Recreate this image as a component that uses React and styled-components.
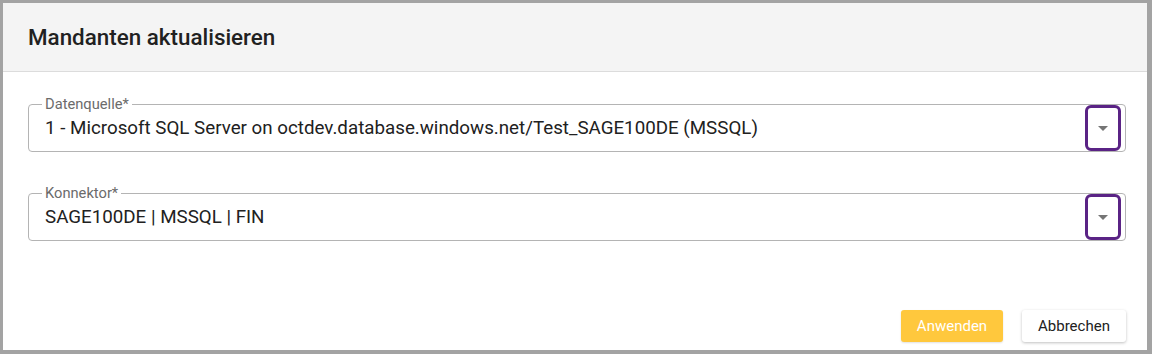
import React from 'react';
import styled, { createGlobalStyle } from 'styled-components';

const GlobalStyle = createGlobalStyle`
  html, body {
    margin: 0;
    padding: 0;
    background: #a3a3a3;
    font-family: Roboto, "Liberation Sans", Arial, sans-serif;
  }
  * { box-sizing: border-box; }
`;

const Dialog = styled.div`
  margin: 3px 5px 4px 3px;
  height: 347px;
  background: #ffffff;
  display: flex;
  flex-direction: column;
`;

const Header = styled.div`
  height: 69px;
  background: #f4f4f4;
  border-bottom: 1px solid #dcdcdc;
  display: flex;
  align-items: center;
  padding-left: 25px;
`;

const Title = styled.h2`
  margin: 0;
  font-size: 22.4px;
  font-weight: 500;
  color: #212121;
`;

const Body = styled.div`
  padding: 32px 21px 0 25px;
  display: flex;
  flex-direction: column;
  gap: 41px;
`;

const Field = styled.div`
  position: relative;
  height: 48px;
  border: 1px solid #b4b4b4;
  border-radius: 4px;
  display: flex;
  align-items: stretch;
  padding: 0 4px 0 16px;
`;

const Label = styled.span`
  position: absolute;
  top: -9px;
  left: 13px;
  padding: 0 3px;
  background: #ffffff;
  font-size: 14.7px;
  line-height: 17px;
  color: #6b6b6b;
`;

const Value = styled.div`
  flex: 1;
  display: flex;
  align-items: center;
  font-size: 18.75px;
  color: #212121;
`;

const ArrowBox = styled.div`
  width: 36px;
  border: 3.5px solid #5a2385;
  border-radius: 6px;
  display: flex;
  align-items: center;
  justify-content: center;
`;

const Arrow = styled.span`
  width: 0;
  height: 0;
  border-left: 5.5px solid transparent;
  border-right: 5.5px solid transparent;
  border-top: 5.5px solid #757575;
`;

const Footer = styled.div`
  display: flex;
  justify-content: flex-end;
  gap: 19px;
  padding-right: 21px;
  margin-top: 69px;
`;

const Button = styled.button`
  height: 32px;
  width: ${p => p.$width}px;
  border: none;
  border-radius: 3px;
  font-family: inherit;
  font-size: 15px;
  cursor: pointer;
  background: ${p => (p.$primary ? '#ffc83d' : '#ffffff')};
  color: ${p => (p.$primary ? '#ffffff' : '#212121')};
  box-shadow: ${p => (p.$primary ? '0 1px 2px rgba(0,0,0,0.12)' : '0 1px 3px rgba(0,0,0,0.25)')};
`;

const SelectField = ({ label, value }) => (
  <Field>
    <Label>{label}</Label>
    <Value>{value}</Value>
    <ArrowBox>
      <Arrow />
    </ArrowBox>
  </Field>
);

export default function App() {
  return (
    <>
      <GlobalStyle />
      <Dialog>
        <Header>
          <Title>Mandanten aktualisieren</Title>
        </Header>
        <Body>
          <SelectField
            label="Datenquelle*"
            value="1 - Microsoft SQL Server on octdev.database.windows.net/Test_SAGE100DE (MSSQL)"
          />
          <SelectField label="Konnektor*" value="SAGE100DE | MSSQL | FIN" />
        </Body>
        <Footer>
          <Button $primary $width={102}>Anwenden</Button>
          <Button $width={104}>Abbrechen</Button>
        </Footer>
      </Dialog>
    </>
  );
}
